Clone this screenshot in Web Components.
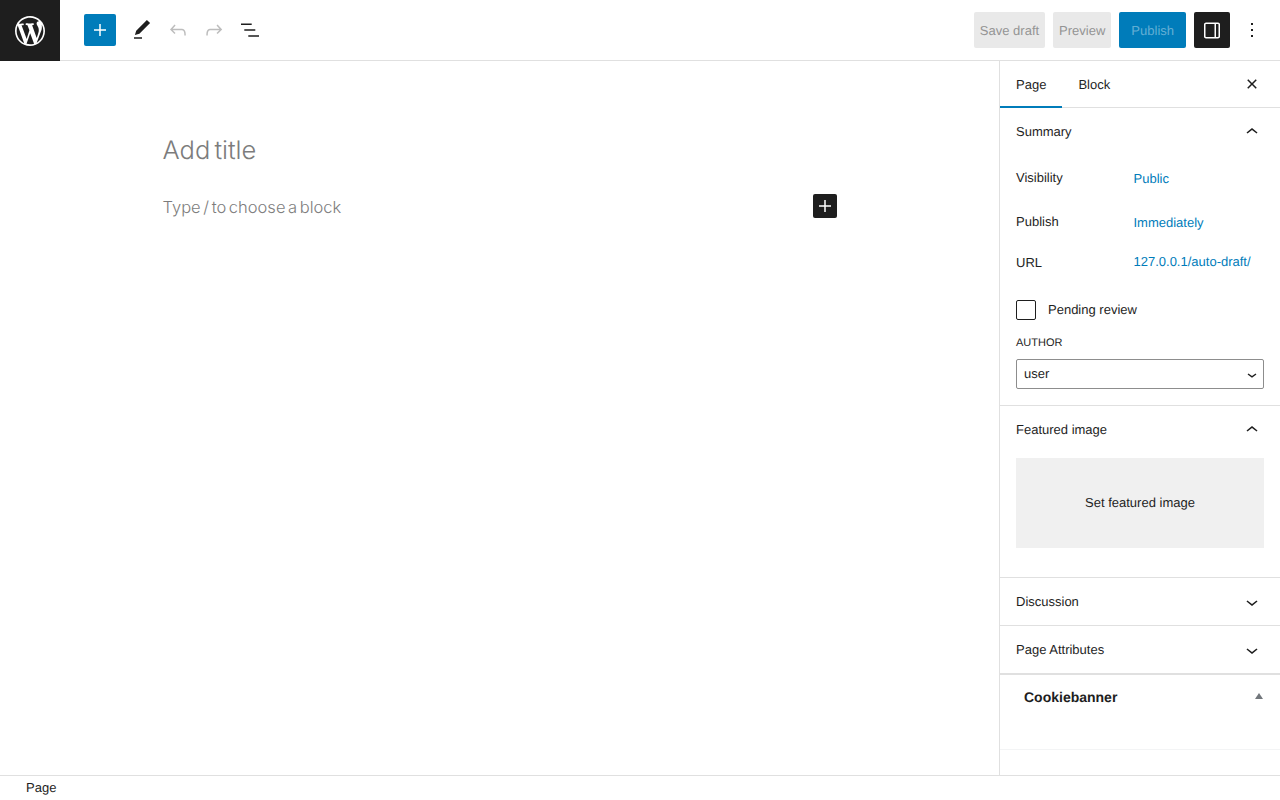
<!DOCTYPE html>
<html lang="en">
<head>
<meta charset="utf-8">
<title>Add New Page</title>
<style>
  html, body { margin: 0; height: 100%; overflow: hidden; background: #fff; }
  body {
    font-family: "Liberation Sans", Arial, sans-serif;
    font-size: 13px;
    color: #1e1e1e;
    text-rendering: geometricPrecision;
  }
</style>
</head>
<body>
<editor-app>
  <editor-header slot="header"></editor-header>
  <editor-canvas slot="canvas"></editor-canvas>
  <editor-sidebar slot="sidebar">
    <side-panel title="Summary" open>
      <summary-fields></summary-fields>
    </side-panel>
    <side-panel title="Featured image" open>
      <featured-image></featured-image>
    </side-panel>
    <side-panel title="Discussion"></side-panel>
    <side-panel title="Page Attributes"></side-panel>
    <meta-box title="Cookiebanner"></meta-box>
  </editor-sidebar>
  <editor-footer slot="footer">Page</editor-footer>
</editor-app>

<script>
const ICONS = {
  plus: "M18 11.25h-5.25V6h-1.5v5.25H6v1.5h5.25V18h1.5v-5.25H18z",
  edit: "M20.1 5.1L16.9 2 6.2 12.7l-1.3 4.4 4.5-1.3L20.1 5.1zM4 20.8h8v-1.5H4v1.5z",
  undo: "M18.3 11.7c-.6-.6-1.4-.9-2.3-.9H6.7l2.9-3.3-1.1-1-4.5 5L8.5 16l1-1-2.7-2.7H16c.5 0 .9.2 1.3.5 1 1 1 3.4 1 4.5v.3h1.5v-.2c0-1.5 0-4.3-1.5-5.7z",
  redo: "M15.6 6.5l-1.1 1 2.9 3.3H8c-.9 0-1.7.3-2.3.9-1.4 1.5-1.4 4.2-1.4 5.6v.2h1.5v-.3c0-1.1 0-3.5 1-4.5.3-.3.7-.5 1.3-.5h9.2L14.5 15l1.1 1.1 4.6-4.6-4.6-5z",
  list: "M3 5.5h10.7V7H3zM6.3 11.25h11v1.5h-11zM10.3 17.25H21v1.5H10.3z",
  sidebar: "M18 4H6c-1.1 0-2 .9-2 2v12c0 1.1.9 2 2 2h12c1.1 0 2-.9 2-2V6c0-1.1-.9-2-2-2zM6 5.5h8.5v13H6c-.3 0-.5-.2-.5-.5V6c0-.3.2-.5.5-.5zm12.5 12.5c0 .3-.2.5-.5.5h-2v-13h2c.3 0 .5.2.5.5v12z",
  more: "M13 19h-2v-2h2v2zm0-6h-2v-2h2v2zm0-6h-2V5h2v2z",
  close: "M12 13.06l3.712 3.713 1.061-1.06L13.061 12l3.712-3.712-1.06-1.06L12 10.938 8.288 7.227l-1.061 1.06L10.939 12l-3.712 3.712 1.06 1.061L12 13.061z",
  up: "M6.5 12.4L12 8l5.5 4.4-.9 1.2L12 10l-4.5 3.6-1-1.2z",
  down: "M17.5 11.6L12 16l-5.5-4.4.9-1.2L12 14l4.5-3.6 1 1.2z",
  wp: "M20 10c0-5.51-4.49-10-10-10C4.48 0 0 4.49 0 10c0 5.52 4.48 10 10 10 5.51 0 10-4.48 10-10zM7.78 15.37L4.37 6.22c.55-.02 1.17-.08 1.17-.08.5-.06.44-1.13-.06-1.11 0 0-1.45.11-2.37.11-.18 0-.37 0-.58-.01C4.12 2.69 6.87 1.11 10 1.11c2.33 0 4.45.87 6.05 2.34-.68-.11-1.65.39-1.65 1.58 0 .74.45 1.36.9 2.1.35.61.55 1.36.55 2.46 0 1.49-1.4 5-1.4 5l-3.03-8.37c.54-.02.82-.17.82-.17.5-.05.44-1.25-.06-1.22 0 0-1.44.12-2.38.12-.87 0-2.33-.12-2.33-.12-.5-.03-.56 1.2-.06 1.22l.92.08 1.26 3.41zM17.41 10c.24-.64.74-1.87.43-4.25.7 1.29 1.05 2.71 1.05 4.25 0 3.29-1.73 6.24-4.4 7.78.97-2.59 1.94-5.2 2.92-7.78zM6.1 18.09C3.12 16.65 1.11 13.53 1.11 10c0-1.3.23-2.48.72-3.59C3.25 10.3 4.67 14.2 6.1 18.09zm4.03-6.63l2.58 6.98c-.86.29-1.76.45-2.71.45-.79 0-1.57-.11-2.29-.33.81-2.38 1.62-4.74 2.42-7.1z"
};

class WpIcon extends HTMLElement {
  connectedCallback() {
    const size = this.getAttribute("size") || 24;
    const box = this.getAttribute("name") === "wp" ? "-2 -2 24 24" : "0 0 24 24";
    this.attachShadow({ mode: "open" }).innerHTML = `
      <style>
        :host { display: block; width: ${size}px; height: ${size}px; }
        svg { display: block; fill: currentColor; }
      </style>
      <svg width="${size}" height="${size}" viewBox="${box}"><path d="${ICONS[this.getAttribute("name")]}"/></svg>`;
  }
}
customElements.define("wp-icon", WpIcon);

class EditorApp extends HTMLElement {
  constructor() {
    super();
    this.attachShadow({ mode: "open" }).innerHTML = `
      <style>
        :host { display: flex; flex-direction: column; height: 800px; }
        .main { flex: 1; display: flex; min-height: 0; }
        ::slotted(editor-canvas) { flex: 1; min-width: 0; }
      </style>
      <slot name="header"></slot>
      <div class="main">
        <slot name="canvas"></slot>
        <slot name="sidebar"></slot>
      </div>
      <slot name="footer"></slot>`;
  }
}
customElements.define("editor-app", EditorApp);

class EditorHeader extends HTMLElement {
  constructor() {
    super();
    this.attachShadow({ mode: "open" }).innerHTML = `
      <style>
        :host {
          display: flex;
          align-items: center;
          height: 60px;
          flex: none;
          border-bottom: 1px solid #e0e0e0;
          background: #fff;
        }
        .logo {
          width: 60px;
          height: 61px;
          margin-bottom: -1px;
          background: #1e1e1e;
          color: #fff;
          display: flex;
          align-items: center;
          justify-content: center;
        }
        .tools { display: flex; align-items: center; margin-left: 24px; flex: 1; }
        .add {
          width: 32px;
          height: 32px;
          margin-right: 8px;
          border-radius: 2px;
          background: #007cba;
          color: #fff;
          display: flex;
          align-items: center;
          justify-content: center;
        }
        .tool { width: 36px; height: 36px; display: flex; align-items: center; justify-content: center; }
        .off { color: #bdbdbd; }
        .actions { display: flex; align-items: center; gap: 8px; padding-right: 10px; }
        .btn {
          height: 36px;
          padding: 0 6px;
          border-radius: 2px;
          display: flex;
          align-items: center;
          font-size: 13px;
        }
        .ghost { background: #e9e9e9; color: #949494; }
        .primary { padding: 0 12px; background: #007cba; color: rgba(255,255,255,.4); }
        .toggle { width: 36px; height: 36px; border-radius: 2px; background: #1e1e1e; color: #fff; display: flex; align-items: center; justify-content: center; }
        .toggle wp-icon { transform: translateY(.5px); }
        .kebab { width: 36px; height: 36px; margin-left: -4px; display: flex; align-items: center; justify-content: center; }
      </style>
      <div class="logo"><wp-icon name="wp" size="36"></wp-icon></div>
      <div class="tools">
        <div class="add"><wp-icon name="plus"></wp-icon></div>
        <div class="tool"><wp-icon name="edit"></wp-icon></div>
        <div class="tool off"><wp-icon name="undo"></wp-icon></div>
        <div class="tool off"><wp-icon name="redo"></wp-icon></div>
        <div class="tool"><wp-icon name="list"></wp-icon></div>
      </div>
      <div class="actions">
        <div class="btn ghost">Save draft</div>
        <div class="btn ghost">Preview</div>
        <div class="btn primary">Publish</div>
        <div class="toggle"><wp-icon name="sidebar"></wp-icon></div>
        <div class="kebab"><wp-icon name="more"></wp-icon></div>
      </div>`;
  }
}
customElements.define("editor-header", EditorHeader);

class EditorCanvas extends HTMLElement {
  constructor() {
    super();
    this.attachShadow({ mode: "open" }).innerHTML = `
      <style>
        :host {
          display: block;
          font-family: Inter, "Noto Sans", sans-serif;
          color: #7c7c7c;
        }
        .col { width: 674px; margin: 0 auto; padding-top: 71px; }
        .title { height: 38px; line-height: 38px; font-size: 25.5px; font-weight: 300; word-spacing: -3px; }
        .block {
          margin-top: 24px;
          height: 24px;
          display: flex;
          align-items: center;
          justify-content: space-between;
          font-size: 16.5px;
          font-weight: 300;
          word-spacing: -2px;
        }
        .block span { margin-top: 2px; }
        .ins {
          width: 24px;
          height: 24px;
          border-radius: 2px;
          background: #1e1e1e;
          color: #fff;
        }
      </style>
      <div class="col">
        <div class="title">Add title</div>
        <div class="block">
          <span>Type / to choose a block</span>
          <div class="ins"><wp-icon name="plus"></wp-icon></div>
        </div>
      </div>`;
  }
}
customElements.define("editor-canvas", EditorCanvas);

class EditorSidebar extends HTMLElement {
  constructor() {
    super();
    this.attachShadow({ mode: "open" }).innerHTML = `
      <style>
        :host {
          display: block;
          flex: none;
          width: 280px;
          border-left: 1px solid #e0e0e0;
          background: #fff;
        }
        .tabs {
          height: 46px;
          border-bottom: 1px solid #e0e0e0;
          display: flex;
          align-items: stretch;
        }
        .tab { padding: 0 16px; display: flex; align-items: center; height: 46px; box-sizing: border-box; }
        .tab.on { box-shadow: inset 0 -2px 0 #007cba; height: 47px; padding-bottom: 1px; }
        .close { margin-left: auto; width: 36px; margin-right: 10px; display: flex; align-items: center; justify-content: center; }
        wp-icon[name=close] { margin-top: -1px; }
      </style>
      <div class="tabs">
        <div class="tab on">Page</div>
        <div class="tab">Block</div>
        <div class="close"><wp-icon name="close"></wp-icon></div>
      </div>
      <slot></slot>`;
  }
}
customElements.define("editor-sidebar", EditorSidebar);

class SidePanel extends HTMLElement {
  connectedCallback() {
    const open = this.hasAttribute("open");
    this.attachShadow({ mode: "open" }).innerHTML = `
      <style>
        :host { display: block; border-bottom: 1px solid #e0e0e0; }
        .head {
          height: 47px;
          padding: 0 16px;
          display: flex;
          align-items: center;
          justify-content: space-between;
        }
      </style>
      <div class="head">
        <span>${this.getAttribute("title")}</span>
        <wp-icon name="${open ? "up" : "down"}"></wp-icon>
      </div>
      <slot></slot>`;
  }
}
customElements.define("side-panel", SidePanel);

class SummaryFields extends HTMLElement {
  constructor() {
    super();
    this.attachShadow({ mode: "open" }).innerHTML = `
      <style>
        :host { display: block; padding: 1px 16px 16px; }
        .row { display: flex; align-items: center; }
        .h44 { height: 44px; }
        .h36 { height: 36px; }
        .label { width: 117.5px; }
        .h44 .label { margin-bottom: 2px; }
        .h36 .val { margin-top: -2px; }
        .val { color: #007cba; }
        .check { margin-top: 20px; height: 20px; display: flex; align-items: center; gap: 12px; }
        .check span { margin-bottom: 2px; }
        .box {
          width: 20px;
          height: 20px;
          box-sizing: border-box;
          border: 1px solid #1e1e1e;
          border-radius: 2px;
        }
        .author {
          margin-top: 17px;
          height: 13px;
          line-height: 13px;
          font-size: 11px;
          text-transform: uppercase;
        }
        .select {
          margin-top: 9px;
          height: 30px;
          box-sizing: border-box;
          border: 1px solid #8d8d8d;
          border-radius: 2px;
          padding: 0 6px 0 7px;
          display: flex;
          align-items: center;
          justify-content: space-between;
        }
        .select span { margin-bottom: 1px; }
        .select svg { display: block; fill: none; stroke: #1e1e1e; stroke-width: 1.4; margin-top: 1px; }
      </style>
      <div class="row h44"><span class="label">Visibility</span><span class="val">Public</span></div>
      <div class="row h44"><span class="label">Publish</span><span class="val">Immediately</span></div>
      <div class="row h36"><span class="label">URL</span><span class="val">127.0.0.1/auto-draft/</span></div>
      <div class="check"><div class="box"></div><span>Pending review</span></div>
      <div class="author">Author</div>
      <div class="select">
        <span>user</span>
        <svg width="10" height="10" viewBox="0 0 10 10"><path d="M1 4l4 2.8L9 4"/></svg>
      </div>`;
  }
}
customElements.define("summary-fields", SummaryFields);

class FeaturedImage extends HTMLElement {
  constructor() {
    super();
    this.attachShadow({ mode: "open" }).innerHTML = `
      <style>
        :host { display: block; padding: 5px 16px 29px; }
        .drop {
          height: 88px;
          padding-bottom: 2px;
          background: #f0f0f0;
          display: flex;
          align-items: center;
          justify-content: center;
        }
      </style>
      <div class="drop">Set featured image</div>`;
  }
}
customElements.define("featured-image", FeaturedImage);

class MetaBox extends HTMLElement {
  connectedCallback() {
    this.attachShadow({ mode: "open" }).innerHTML = `
      <style>
        :host {
          display: block;
          height: 74px;
          border-top: 1px solid #e0e0e0;
          border-bottom: 1px solid #f3f4f5;
        }
        .head {
          height: 44px;
          padding: 0 17px 0 24px;
          display: flex;
          align-items: center;
          justify-content: space-between;
          font-size: 14px;
          font-weight: 700;
        }
        .tri {
          width: 0;
          height: 0;
          border: 4px solid transparent;
          border-top: 0;
          border-bottom: 6px solid #72777c;
          margin-top: -2px;
        }
      </style>
      <div class="head">
        <span>${this.getAttribute("title")}</span>
        <div class="tri"></div>
      </div>`;
  }
}
customElements.define("meta-box", MetaBox);

class EditorFooter extends HTMLElement {
  constructor() {
    super();
    this.attachShadow({ mode: "open" }).innerHTML = `
      <style>
        :host {
          display: flex;
          align-items: center;
          flex: none;
          box-sizing: border-box;
          height: 25px;
          padding: 0 0 2px 26px;
          border-top: 1px solid #e0e0e0;
          background: #fff;
        }
      </style>
      <slot></slot>`;
  }
}
customElements.define("editor-footer", EditorFooter);
</script>
</body>
</html>
